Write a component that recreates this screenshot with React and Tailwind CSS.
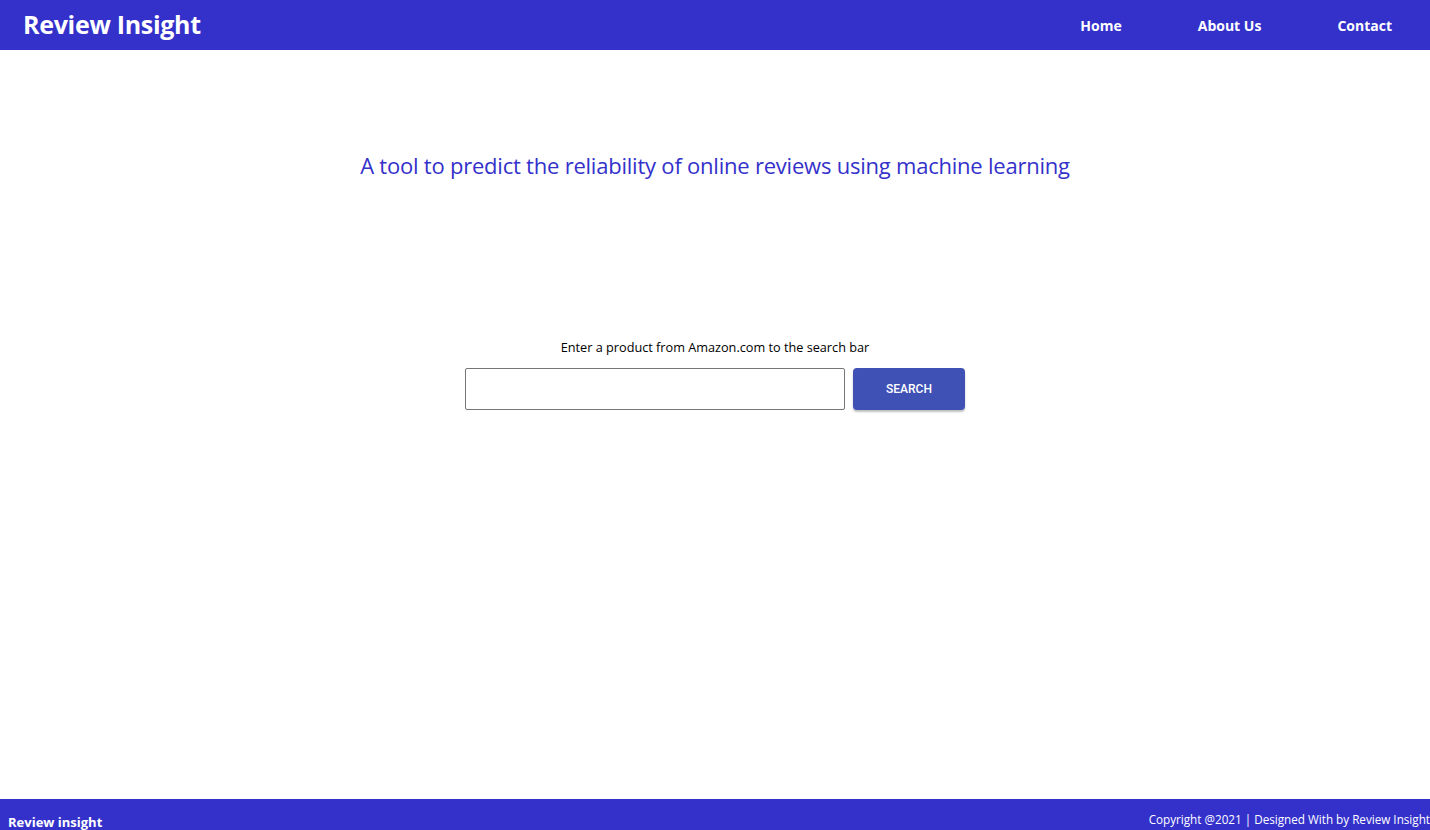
export default function App() {
  return (
    <div className="h-[830px] overflow-hidden bg-white" style={{ fontFamily: '"Open Sans", "Noto Sans", sans-serif' }}>
      {/* Header */}
      <header className="h-[50px] bg-[#3431cb] flex items-center justify-between pl-[23px] pr-[38px]">
        <h1 className="text-[25px] font-bold text-white tracking-[-0.3px]">Review Insight</h1>
        <nav className="flex items-center gap-[76px] text-[14px] font-bold text-white">
          <a href="#">Home</a>
          <a href="#">About Us</a>
          <a href="#">Contact</a>
        </nav>
      </header>

      {/* Main */}
      <main className="h-[749px] flex flex-col items-center">
        <h2 className="mt-[100px] text-[22px] leading-[31px] text-[#3431cb] tracking-[-0.22px]">
          A tool to predict the reliability of online reviews using machine learning
        </h2>
        <p className="mt-[157px] text-[12.7px] text-black">Enter a product from Amazon.com to the search bar</p>
        <div className="mt-[11px] flex items-center gap-[8px]">
          <input
            type="text"
            className="w-[380px] h-[42px] border border-[#767676] rounded-[2px] px-2 outline-none"
          />
          <button className="w-[112px] h-[42px] bg-[#3f51b5] rounded-[4px] text-white text-[12px] font-medium shadow-[0_2px_2px_rgba(0,0,0,0.25)]" style={{ fontFamily: 'Roboto, sans-serif' }}>
            SEARCH
          </button>
        </div>
      </main>

      {/* Footer */}
      <footer className="bg-[#3431cb] h-[60px] flex justify-between text-white">
        <span className="pl-[8px] pt-[14px] text-[13px] font-bold">Review insight</span>
        <span className="pt-[12px] text-[11.7px] whitespace-nowrap">Copyright @2021 | Designed With by Review Insight</span>
      </footer>
    </div>
  );
}
